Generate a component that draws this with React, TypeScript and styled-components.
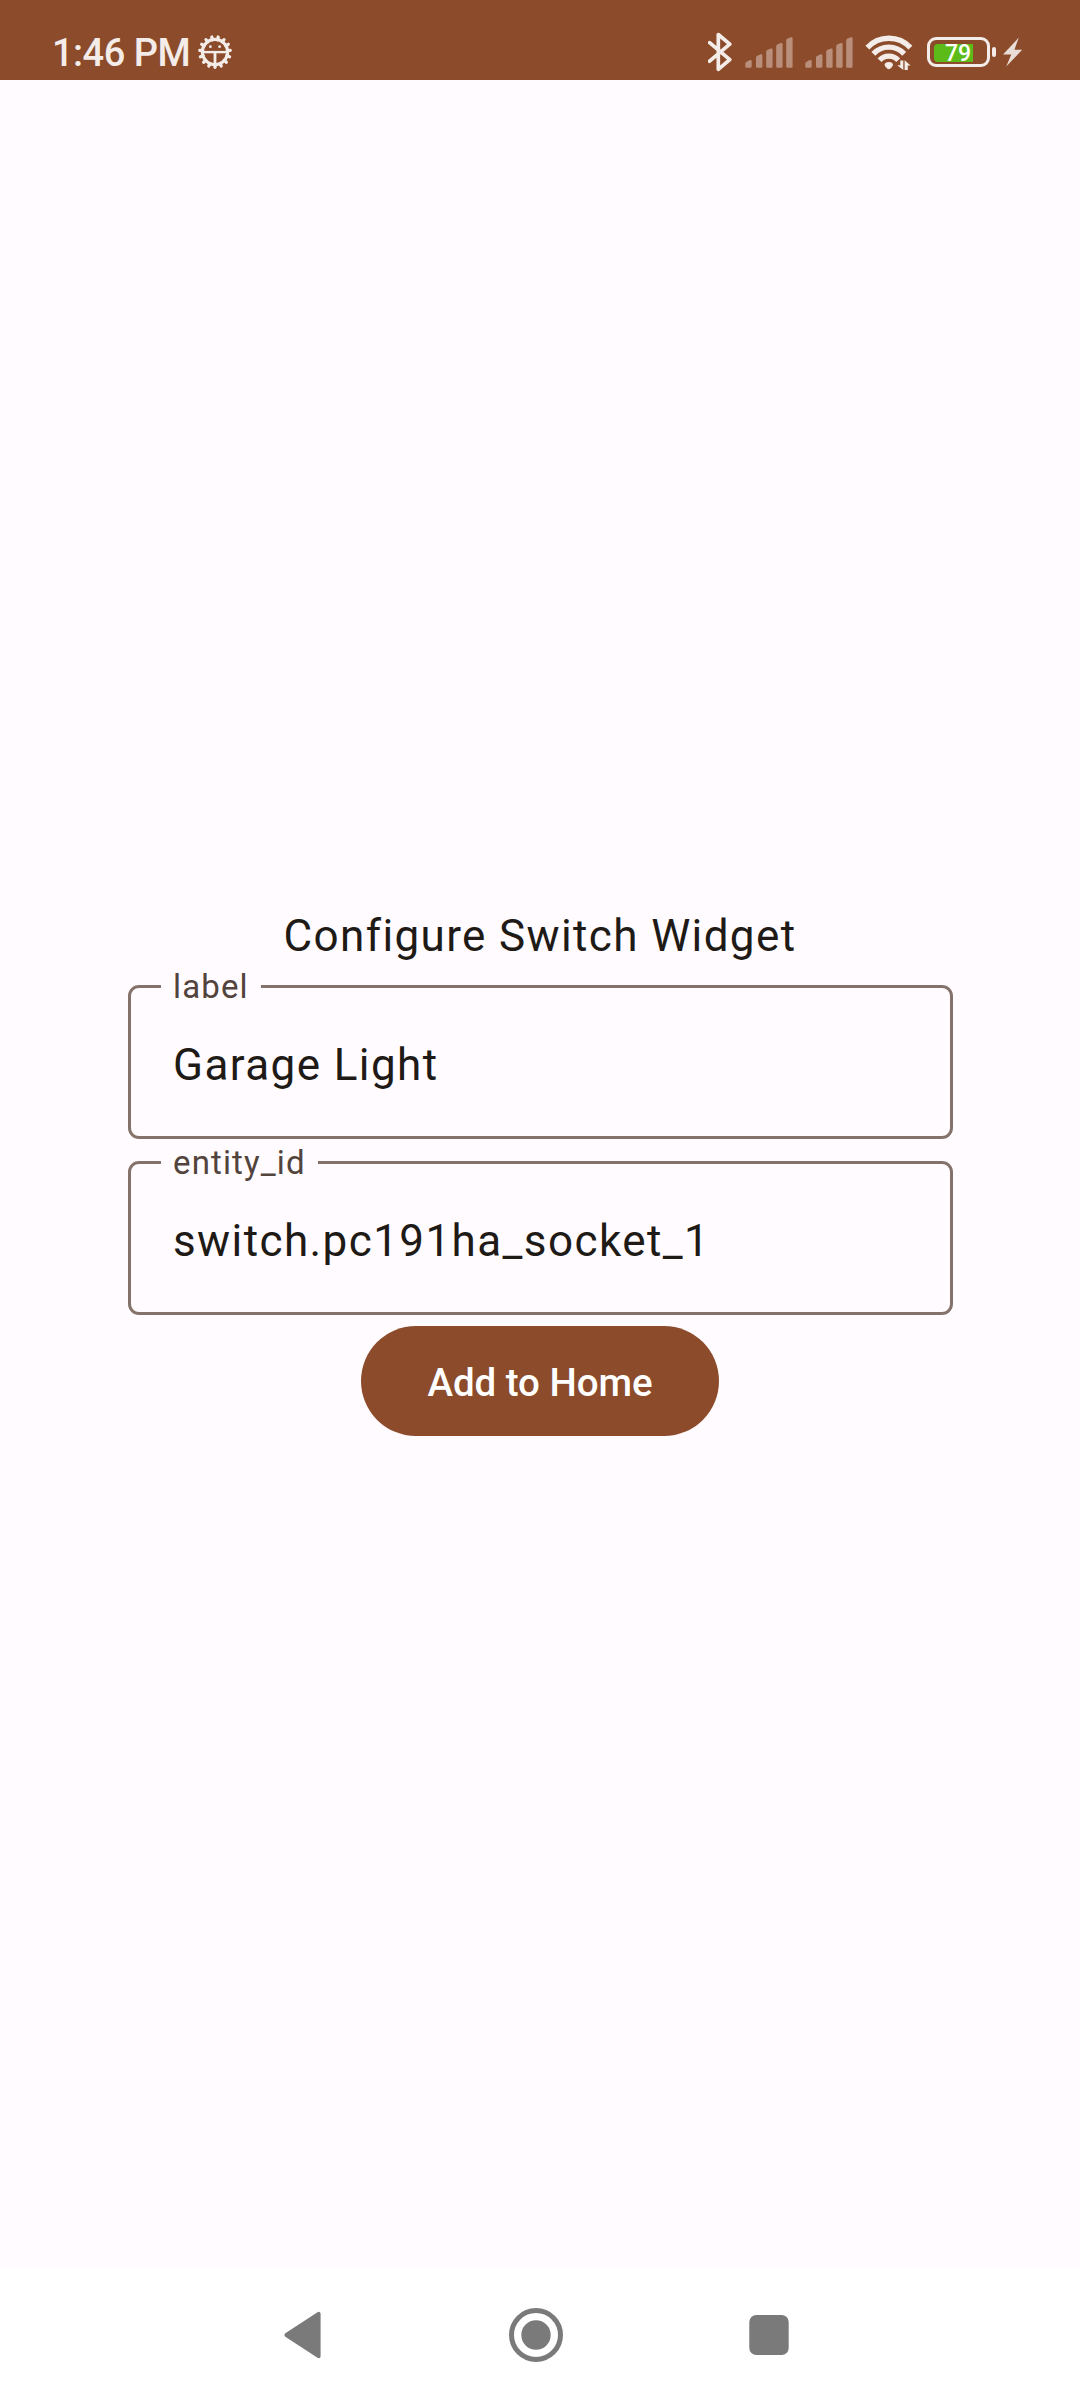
import React from "react";
import styled, { createGlobalStyle } from "styled-components";

const color = {
  primary: "#8c4c2b",
  onPrimary: "#ffffff",
  background: "#fffbff",
  text: "#201a17",
  label: "#52443d",
  outline: "#85736b",
  status: "#f4ece8",
  statusDim: "#b98f7b",
  charge: "#5cbb18",
  nav: "#7a7a7a",
};

const GlobalStyle = createGlobalStyle`
  * { box-sizing: border-box; }
  body { margin: 0; background: ${color.background}; }
`;

const Screen = styled.div`
  display: flex;
  flex-direction: column;
  width: 1080px;
  height: 2400px;
  background: ${color.background};
  color: ${color.text};
  font-family: Roboto, "Noto Sans", sans-serif;
`;

const StatusBar = styled.header`
  display: flex;
  justify-content: space-between;
  align-items: center;
  height: 80px;
  padding: 24px 57px 0 52px;
  background: ${color.primary};
  color: ${color.status};
`;

const StatusGroup = styled.div`
  display: flex;
  align-items: center;
`;

const Clock = styled.time`
  width: 146px;
  padding-top: 2px;
  font-size: 38px;
  line-height: 44px;
  font-weight: 500;
  letter-spacing: -0.5px;
  white-space: nowrap;
`;

const Icon = styled.svg<{ $w: number; $h?: number; $gap?: number }>`
  display: block;
  flex: none;
  width: ${(p) => p.$w}px;
  height: ${(p) => p.$h ?? 40}px;
  margin-left: ${(p) => p.$gap ?? 0}px;
`;

const Battery = styled.div`
  display: grid;
  align-items: center;
  width: 63px;
  height: 30px;
  margin-left: 14px;
  border: 3px solid ${color.status};
  border-radius: 9px;
`;

const BatteryFill = styled.div`
  grid-area: 1 / 1;
  width: 39px;
  height: 18px;
  margin-left: 4px;
  border-radius: 4px 0 0 4px;
  background: ${color.charge};
`;

const BatteryLevel = styled.span`
  grid-area: 1 / 1;
  padding: 2px 1px 0 0;
  text-align: center;
  font-size: 23px;
  line-height: 24px;
  font-weight: 500;
  color: #ffffff;
`;

const BatteryTip = styled.div`
  width: 4px;
  height: 10px;
  margin-left: 2px;
  border-radius: 2px;
  background: ${color.status};
`;

const Content = styled.main`
  display: flex;
  flex: 1;
  flex-direction: column;
  align-items: center;
  padding-top: 823px;
`;

const Title = styled.h1`
  margin: 0 0 -4px;
  font-size: 44px;
  line-height: 66px;
  font-weight: 400;
  letter-spacing: 1.375px;
`;

const Field = styled.fieldset`
  width: 825px;
  height: 174px;
  margin: 0 0 2px 1px;
  padding: 0 41px 0 42px;
  border: 3px solid ${color.outline};
  border-radius: 11px;
`;

const FieldLabel = styled.legend`
  height: 43px;
  margin-left: -12px;
  padding: 0 12px;
  font-size: 33px;
  line-height: 43px;
  letter-spacing: 1.14px;
  color: ${color.label};
`;

const FieldInput = styled.input`
  display: block;
  width: 100%;
  height: 66px;
  margin-top: 24px;
  padding: 0;
  border: 0;
  outline: 0;
  background: transparent;
  color: ${color.text};
  font-family: inherit;
  font-size: 44px;
  letter-spacing: 1.41px;
`;

const Submit = styled.button`
  width: 358px;
  height: 110px;
  margin-top: 9px;
  padding: 3px 0 0;
  border: 0;
  border-radius: 55px;
  background: ${color.primary};
  color: ${color.onPrimary};
  font-family: inherit;
  font-size: 38.5px;
  font-weight: 500;
  letter-spacing: -0.05px;
`;

const NavBar = styled.nav`
  display: grid;
  grid-template-columns: 234px 234px 232px;
  justify-items: center;
  align-items: center;
  height: 131px;
  padding-left: 185px;
  background: #ffffff;
`;

const TEETH = 15;

function GearIcon() {
  return (
    <Icon $w={34} viewBox="198 32 34 40" fill="none" stroke="currentColor">
      <circle cx="215" cy="52" r="12.6" strokeWidth="3.2" />
      {Array.from({ length: TEETH }, (_, i) => (
        <path
          key={i}
          d="M215 39.5V36.7"
          strokeWidth="3.3"
          strokeLinecap="round"
          transform={`rotate(${(i + 0.5) * (360 / TEETH)} 215 52)`}
        />
      ))}
      <path d="M204 52.1H226" strokeWidth="2.4" />
      <path d="M215 53V64" strokeWidth="2.8" />
      <g fill="currentColor" stroke="none">
        <circle cx="210.4" cy="46.7" r="1.4" />
        <circle cx="219.6" cy="46.7" r="1.4" />
      </g>
    </Icon>
  );
}

function BluetoothIcon() {
  return (
    <Icon
      $w={24}
      viewBox="708 32 24 40"
      fill="none"
      stroke="currentColor"
      strokeWidth="3.7"
      strokeLinecap="round"
      strokeLinejoin="round"
    >
      <path d="M709.6 42.7L729.8 59.6L718.3 69.3V34.5L729.8 44.2L709.6 61.2" />
    </Icon>
  );
}

const bars = [
  [0.3, 62.4, 60],
  [11, 56.6, 54.2],
  [21.2, 50.6, 48.6],
  [31.2, 45, 43],
  [41.2, 39.3, 37.2],
];

function SignalIcon({ gap }: { gap: number }) {
  return (
    <Icon $w={48} $gap={gap} viewBox="0 32 48 40" fill={color.statusDim}>
      {bars.map(([x, left, right]) => (
        <path
          key={x}
          d={`M${x} ${left + 1}Q${x} ${left} ${x + 1} ${left - 0.5}L${x + 4.6} ${right}Q${x + 6.4} ${right - 0.4} ${x + 6.4} ${right + 1.4}V66.4Q${x + 6.4} 67.8 ${x + 5} 67.8H${x + 1.4}Q${x} 67.8 ${x} 66.4Z`}
        />
      ))}
    </Icon>
  );
}

function WifiIcon() {
  return (
    <Icon $w={48} $gap={12} viewBox="865 32 48 40" fill="none" stroke="currentColor">
      <g strokeWidth="5.4">
        <path d="M867.4 47.6A29.4 29.4 0 0 1 910.4 47.6" />
        <path d="M873.4 53.8A21 21 0 0 1 904.2 53.8" />
        <path d="M879.6 60.2A12.6 12.6 0 0 1 898.2 60.2" />
      </g>
      <path
        d="M888.8 62C891.3 62 893 63.4 893 64.8C893 66 890.4 69.2 888.8 69.2C887.2 69.2 884.6 66 884.6 64.8C884.6 63.4 886.3 62 888.8 62Z"
        fill="currentColor"
        stroke="none"
      />
      <g fill="currentColor" stroke="none">
        <path d="M900.3 60.5H903.3V70L897.2 65.2H900.3Z" />
        <path d="M904.6 70V60.3L910.6 65.4H907.8V70Z" />
      </g>
    </Icon>
  );
}

function BoltIcon() {
  return (
    <Icon $w={20} $gap={7} viewBox="1003 32 20 40" fill="#eadcd6">
      <path d="M1018.8 37.6L1003 54.4H1011.3L1006.2 66.4L1022.2 49.8H1014.4Z" />
    </Icon>
  );
}

export default function App() {
  return (
    <Screen>
      <GlobalStyle />
      <StatusBar>
        <StatusGroup>
          <Clock>1:46 PM</Clock>
          <GearIcon />
        </StatusGroup>
        <StatusGroup>
          <BluetoothIcon />
          <SignalIcon gap={13} />
          <SignalIcon gap={12} />
          <WifiIcon />
          <Battery>
            <BatteryFill />
            <BatteryLevel>79</BatteryLevel>
          </Battery>
          <BatteryTip />
          <BoltIcon />
        </StatusGroup>
      </StatusBar>
      <Content>
        <Title>Configure Switch Widget</Title>
        <Field>
          <FieldLabel>label</FieldLabel>
          <FieldInput defaultValue="Garage Light" spellCheck={false} />
        </Field>
        <Field>
          <FieldLabel>entity_id</FieldLabel>
          <FieldInput defaultValue="switch.pc191ha_socket_1" spellCheck={false} />
        </Field>
        <Submit>Add to Home</Submit>
      </Content>
      <NavBar>
        <Icon $w={38} $h={48} viewBox="0 0 38 48" fill={color.nav} stroke={color.nav}>
          <path d="M3.4 24L35.6 2.8V45.2Z" strokeWidth="4" strokeLinejoin="round" />
        </Icon>
        <Icon $w={54} $h={54} viewBox="0 0 54 54">
          <circle cx="27" cy="27" r="24.5" fill="none" stroke={color.nav} strokeWidth="5" />
          <circle cx="27" cy="27" r="14.7" fill={color.nav} />
        </Icon>
        <Icon $w={40} $h={40} viewBox="0 0 40 40">
          <rect x="0.3" y="0" width="39.4" height="40" rx="7" fill={color.nav} />
        </Icon>
      </NavBar>
    </Screen>
  );
}
